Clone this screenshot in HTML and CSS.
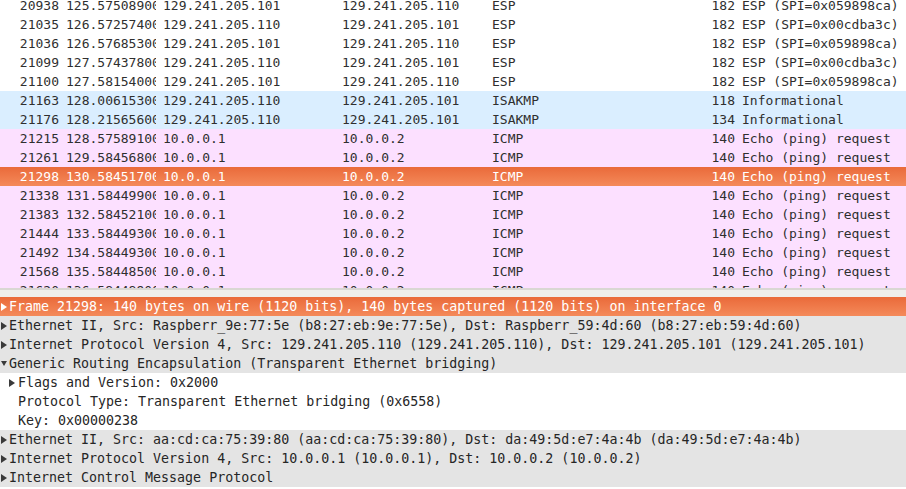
FILE: index.html
```html
<!DOCTYPE html>
<html>
<head>
<meta charset="utf-8">
<link rel="stylesheet" href="styles.css">
</head>
<body>
<div class="list">
  <div class="rows">
    <div class="row"><span class="c r">20938</span><span class="c t">125.575089000</span><span class="c">129.241.205.101</span><span class="c">129.241.205.110</span><span class="c">ESP</span><span class="c r">182</span><span class="c">ESP (SPI=0x059898ca)</span></div>
    <div class="row"><span class="c r">21035</span><span class="c t">126.572574000</span><span class="c">129.241.205.110</span><span class="c">129.241.205.101</span><span class="c">ESP</span><span class="c r">182</span><span class="c">ESP (SPI=0x00cdba3c)</span></div>
    <div class="row"><span class="c r">21036</span><span class="c t">126.576853000</span><span class="c">129.241.205.101</span><span class="c">129.241.205.110</span><span class="c">ESP</span><span class="c r">182</span><span class="c">ESP (SPI=0x059898ca)</span></div>
    <div class="row"><span class="c r">21099</span><span class="c t">127.574378000</span><span class="c">129.241.205.110</span><span class="c">129.241.205.101</span><span class="c">ESP</span><span class="c r">182</span><span class="c">ESP (SPI=0x00cdba3c)</span></div>
    <div class="row"><span class="c r">21100</span><span class="c t">127.581540000</span><span class="c">129.241.205.101</span><span class="c">129.241.205.110</span><span class="c">ESP</span><span class="c r">182</span><span class="c">ESP (SPI=0x059898ca)</span></div>
    <div class="row udp"><span class="c r">21163</span><span class="c t">128.006153000</span><span class="c">129.241.205.110</span><span class="c">129.241.205.101</span><span class="c">ISAKMP</span><span class="c r">118</span><span class="c">Informational</span></div>
    <div class="row udp"><span class="c r">21176</span><span class="c t">128.215656000</span><span class="c">129.241.205.110</span><span class="c">129.241.205.101</span><span class="c">ISAKMP</span><span class="c r">134</span><span class="c">Informational</span></div>
    <div class="row icmp"><span class="c r">21215</span><span class="c t">128.575891000</span><span class="c">10.0.0.1</span><span class="c">10.0.0.2</span><span class="c">ICMP</span><span class="c r">140</span><span class="c">Echo (ping) request</span></div>
    <div class="row icmp"><span class="c r">21261</span><span class="c t">129.584568000</span><span class="c">10.0.0.1</span><span class="c">10.0.0.2</span><span class="c">ICMP</span><span class="c r">140</span><span class="c">Echo (ping) request</span></div>
    <div class="row sel"><span class="c r">21298</span><span class="c t">130.584517000</span><span class="c">10.0.0.1</span><span class="c">10.0.0.2</span><span class="c">ICMP</span><span class="c r">140</span><span class="c">Echo (ping) request</span></div>
    <div class="row icmp"><span class="c r">21338</span><span class="c t">131.584499000</span><span class="c">10.0.0.1</span><span class="c">10.0.0.2</span><span class="c">ICMP</span><span class="c r">140</span><span class="c">Echo (ping) request</span></div>
    <div class="row icmp"><span class="c r">21383</span><span class="c t">132.584521000</span><span class="c">10.0.0.1</span><span class="c">10.0.0.2</span><span class="c">ICMP</span><span class="c r">140</span><span class="c">Echo (ping) request</span></div>
    <div class="row icmp"><span class="c r">21444</span><span class="c t">133.584493000</span><span class="c">10.0.0.1</span><span class="c">10.0.0.2</span><span class="c">ICMP</span><span class="c r">140</span><span class="c">Echo (ping) request</span></div>
    <div class="row icmp"><span class="c r">21492</span><span class="c t">134.584493000</span><span class="c">10.0.0.1</span><span class="c">10.0.0.2</span><span class="c">ICMP</span><span class="c r">140</span><span class="c">Echo (ping) request</span></div>
    <div class="row icmp"><span class="c r">21568</span><span class="c t">135.584485000</span><span class="c">10.0.0.1</span><span class="c">10.0.0.2</span><span class="c">ICMP</span><span class="c r">140</span><span class="c">Echo (ping) request</span></div>
    <div class="row icmp"><span class="c r">21620</span><span class="c t">136.584489000</span><span class="c">10.0.0.1</span><span class="c">10.0.0.2</span><span class="c">ICMP</span><span class="c r">140</span><span class="c">Echo (ping) request</span></div>
  </div>
</div>
<div class="splitter"></div>
<div class="tree">
  <div class="node top sel"><span class="tri right"></span><span class="txt">Frame 21298: 140 bytes on wire (1120 bits), 140 bytes captured (1120 bits) on interface 0</span></div>
  <div class="node top"><span class="tri right"></span><span class="txt">Ethernet II, Src: Raspberr_9e:77:5e (b8:27:eb:9e:77:5e), Dst: Raspberr_59:4d:60 (b8:27:eb:59:4d:60)</span></div>
  <div class="node top"><span class="tri right"></span><span class="txt">Internet Protocol Version 4, Src: 129.241.205.110 (129.241.205.110), Dst: 129.241.205.101 (129.241.205.101)</span></div>
  <div class="node top"><span class="tri down"></span><span class="txt">Generic Routing Encapsulation (Transparent Ethernet bridging)</span></div>
  <div class="node child"><span class="tri right"></span><span class="txt">Flags and Version: 0x2000</span></div>
  <div class="node leaf"><span class="txt">Protocol Type: Transparent Ethernet bridging (0x6558)</span></div>
  <div class="node leaf"><span class="txt">Key: 0x00000238</span></div>
  <div class="node top"><span class="tri right"></span><span class="txt">Ethernet II, Src: aa:cd:ca:75:39:80 (aa:cd:ca:75:39:80), Dst: da:49:5d:e7:4a:4b (da:49:5d:e7:4a:4b)</span></div>
  <div class="node top"><span class="tri right"></span><span class="txt">Internet Protocol Version 4, Src: 10.0.0.1 (10.0.0.1), Dst: 10.0.0.2 (10.0.0.2)</span></div>
  <div class="node top"><span class="tri right"></span><span class="txt">Internet Control Message Protocol</span></div>
</div>
</body>
</html>
```

FILE: styles.css
```css
html, body {
  margin: 0;
  padding: 0;
}
body {
  width: 906px;
  height: 489px;
  overflow: hidden;
  background: #ffffff;
  font-family: "DejaVu Sans Mono", monospace;
  font-size: 13px;
  color: #2f2f2f;
}
.list {
  height: 288px;
  overflow: hidden;
}
.rows {
  margin-top: -4px;
}
.row {
  display: grid;
  grid-template-columns: 62px 97px 179px 150px 170px 80px 1fr;
  height: 19px;
  line-height: 19px;
  background: #ffffff;
}
.row.udp {
  background: #daeeff;
}
.row.icmp {
  background: #fce0ff;
}
.row.sel, .node.sel {
  background: linear-gradient(to bottom, #ea6a3a, #f48a5a);
  color: #ffffff;
}
.c {
  display: block;
  padding: 0 4px;
  overflow: hidden;
  white-space: nowrap;
}
.c.t {
  clip-path: inset(0 3px 0 0);
}
.c.r {
  text-align: right;
  padding-right: 3px;
}
.splitter {
  height: 9px;
  box-sizing: border-box;
  background: #efeeec;
  border-top: 2px solid #d9d7d3;
}
.tree {
  background: #ffffff;
  font-size: 13.3px;
  color: #262626;
}
.node {
  display: flex;
  align-items: center;
  height: 19px;
  line-height: 19px;
  white-space: nowrap;
  overflow: hidden;
}
.node.top {
  background: #e4e4e4;
}
.node.sel {
  background: linear-gradient(to bottom, #ea6a3a, #f48a5a);
  color: #ffffff;
}
.tri {
  flex: none;
  width: 0;
  height: 0;
}
.tri.right {
  border-left: 6px solid #3a3a3a;
  border-top: 4px solid transparent;
  border-bottom: 4px solid transparent;
  margin-left: 1px;
  margin-right: 2px;
}
.tri.down {
  border-top: 5px solid #3a3a3a;
  border-left: 3px solid transparent;
  border-right: 3px solid transparent;
  margin-left: 1px;
  margin-right: 2px;
}
.node.sel .tri.right {
  border-left-color: #ffffff;
}
.node.child {
  padding-left: 8px;
}
.node.child .tri.right {
  margin-left: 1px;
  margin-right: 3px;
}
.node.leaf {
  padding-left: 18px;
}
```
